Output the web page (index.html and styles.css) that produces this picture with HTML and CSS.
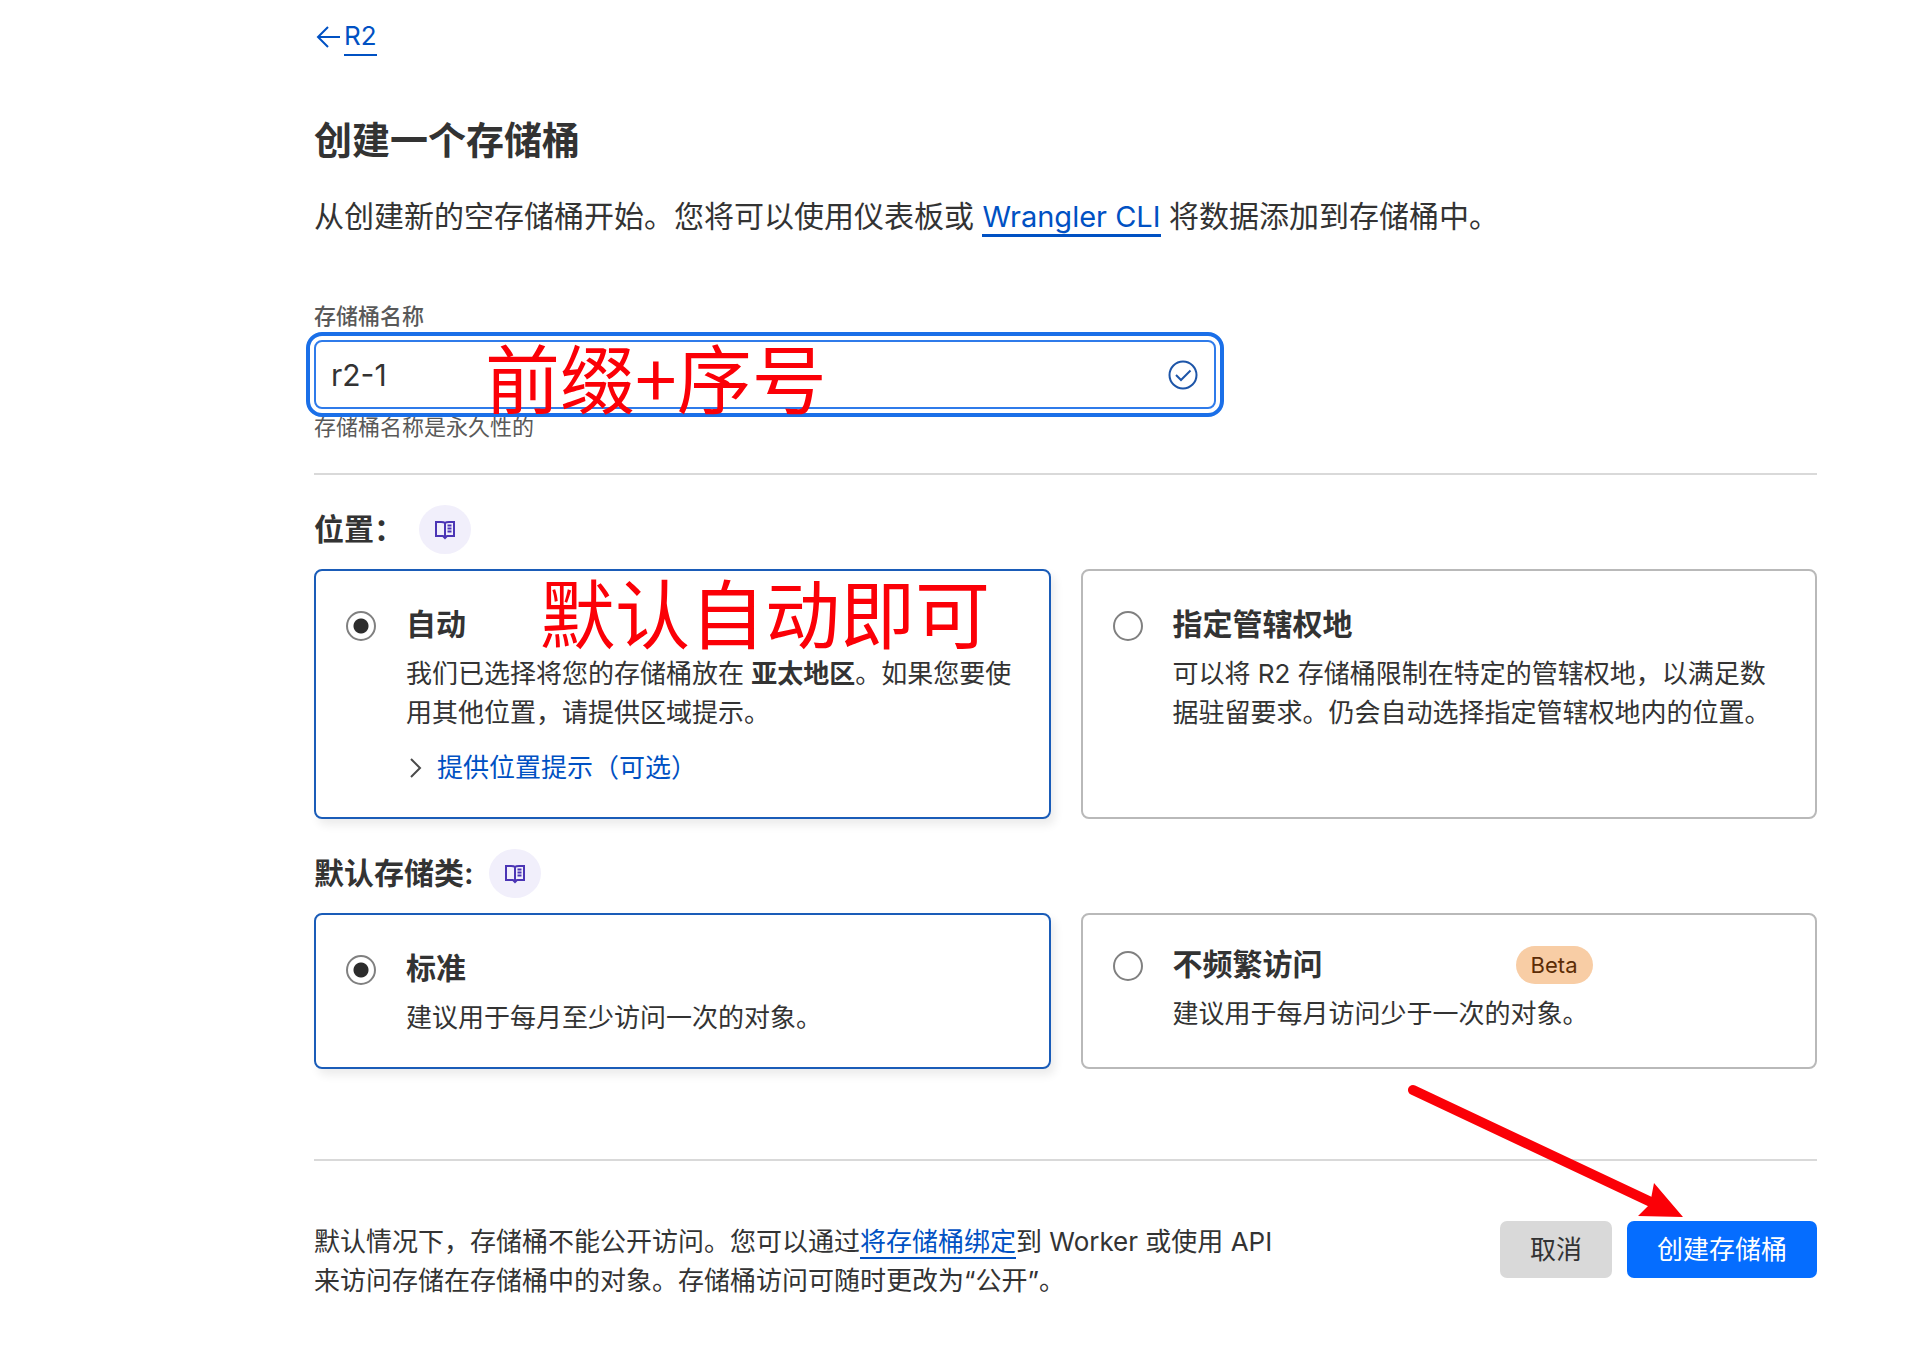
FILE: index.html
```html
<!DOCTYPE html>
<html lang="zh-CN">
<head>
  <meta charset="UTF-8" />
  <meta name="viewport" content="width=device-width, initial-scale=1" />
  <title>创建一个存储桶 | R2</title>
  <link rel="stylesheet" href="styles.css">
</head>
<body>
  <main class="page">
    <nav class="back">
      <svg class="back-icon" viewBox="0 0 24 26" aria-hidden="true">
        <path d="M12 3 L2 13 L12 23 M2 13 H24" />
      </svg>
      <a class="back-link" href="#">R2</a>
    </nav>

    <h1>创建一个存储桶</h1>
    <p class="intro">从创建新的空存储桶开始。您将可以使用仪表板或 <a class="link" href="#">Wrangler CLI</a> 将数据添加到存储桶中。</p>

    <form>
      <div class="field">
        <label for="bucketName">存储桶名称</label>
        <div class="input-wrap">
          <input type="text" id="bucketName" value="r2-1" aria-describedby="bucketHint">
          <svg class="check-icon" viewBox="0 0 30 30" aria-hidden="true">
            <circle cx="15" cy="15" r="13.5" />
            <path d="M8 15 L13 20 L22.5 10.5" />
          </svg>
          <span class="note note-name">前缀+序号</span>
        </div>
        <p class="hint" id="bucketHint">存储桶名称是永久性的</p>
      </div>

      <hr />

      <div class="section-head">
        <h2>位置：</h2>
        <a class="docs" href="#" aria-label="文档">
          <svg class="docs-icon" viewBox="0 0 20 20">
            <path d="M10 3 C9 2 8 2 6 2 H1 V16 H8 L10 18 L12 16 H19 V2 H14 C12 2 11 2 10 3 V18 M12.5 5.5 H16.5 M12.5 8.5 H16.5 M12.5 11.5 H16.5" />
          </svg>
        </a>
      </div>
      <div class="options">
        <div class="option selected">
          <input type="radio" name="location" id="locAuto" checked>
          <div class="option-body">
            <label class="option-title" for="locAuto">自动</label>
            <p>我们已选择将您的存储桶放在 <strong>亚太地区</strong>。如果您要使用其他位置，请提供区域提示。</p>
            <button type="button" class="expand">
              <svg class="chevron" viewBox="0 0 12 20" aria-hidden="true"><path d="M1 1 L10 10 L1 19" /></svg>
              提供位置提示（可选）
            </button>
          </div>
          <span class="note note-auto">默认自动即可</span>
        </div>
        <div class="option">
          <input type="radio" name="location" id="locJurisdiction">
          <div class="option-body">
            <label class="option-title" for="locJurisdiction">指定管辖权地</label>
            <p>可以将 R2 存储桶限制在特定的管辖权地，以满足数据驻留要求。仍会自动选择指定管辖权地内的位置。</p>
          </div>
        </div>
      </div>

      <div class="section-head">
        <h2>默认存储类:</h2>
        <a class="docs" href="#" aria-label="文档">
          <svg class="docs-icon" viewBox="0 0 20 20">
            <path d="M10 3 C9 2 8 2 6 2 H1 V16 H8 L10 18 L12 16 H19 V2 H14 C12 2 11 2 10 3 V18 M12.5 5.5 H16.5 M12.5 8.5 H16.5 M12.5 11.5 H16.5" />
          </svg>
        </a>
      </div>
      <div class="options">
        <div class="option selected">
          <input type="radio" name="storageClass" id="classStandard" checked>
          <div class="option-body">
            <label class="option-title" for="classStandard">标准</label>
            <p>建议用于每月至少访问一次的对象。</p>
          </div>
        </div>
        <div class="option with-badge">
          <input type="radio" name="storageClass" id="classInfrequent">
          <div class="option-body">
            <div class="title-row">
              <label class="option-title" for="classInfrequent">不频繁访问</label>
              <span class="badge">Beta</span>
            </div>
            <p>建议用于每月访问少于一次的对象。</p>
          </div>
        </div>
      </div>

      <hr class="footer-line" />

      <div class="footer">
        <p class="footer-text">默认情况下，存储桶不能公开访问。您可以通过<a class="link" href="#">将存储桶绑定</a>到 Worker 或使用 API 来访问存储在存储桶中的对象。存储桶访问可随时更改为“公开”。</p>
        <div class="actions">
          <button type="button" class="btn">取消</button>
          <button type="submit" class="btn btn-primary">创建存储桶</button>
          <svg class="arrow" viewBox="0 0 276 134" aria-hidden="true">
            <path class="arrow-line" d="M6 7 L246 120" />
            <path class="arrow-head" d="M247 100 L276 134 L231 133 L243 121 Z" />
          </svg>
        </div>
      </div>
    </form>
  </main>
</body>
</html>
```
FILE: styles.css
```css
/* Basic Reset */
* {
  box-sizing: border-box;
  margin: 0;
  padding: 0;
}
body {
  font-family: Inter, "Noto Sans CJK SC", sans-serif;
  font-size: 26px;
  line-height: 39px;
  color: #333;
  background-color: #fff;
}
button,
input {
  font: inherit;
  color: inherit;
}
.page {
  padding: 18px 103px 60px 314px;
}

/* Back link */
.back {
  display: flex;
  align-items: center;
  gap: 4px;
}
.back-icon {
  width: 24px;
  height: 26px;
  margin-left: 2px;
  fill: none;
  stroke: #0051c3;
  stroke-width: 2;
}
.back-link {
  line-height: 36px;
  color: #0051c3;
  text-decoration: none;
  border-bottom: 2px solid #0051c3;
}

h1 {
  margin-top: 60px;
  font-size: 38px;
  line-height: 48px;
  font-weight: 600;
}
.intro {
  margin-top: 31px;
  font-size: 30px;
  line-height: 42px;
}
.link {
  color: #0051c3;
  text-decoration: none;
  border-bottom: 2px solid #0051c3;
}
.intro .link {
  font-size: 29px;
  border-bottom-width: 3px;
}

/* Bucket name */
.field {
  margin-top: 63px;
  font-size: 22px;
  line-height: 30px;
  color: #595959;
}
.field label {
  display: block;
  font-weight: 500;
}
.input-wrap {
  position: relative;
  width: 60%;
  margin-top: 9px;
  font-size: 30px;
  color: #333;
}
.input-wrap input {
  display: block;
  width: 100%;
  height: 69px;
  padding: 0 60px 0 15px;
  border: 2px solid #2f7bea;
  border-radius: 8px;
  outline: 4px solid #1a6fe8;
  outline-offset: 4px;
  background-color: #fff;
}
.check-icon {
  position: absolute;
  top: 20px;
  right: 18px;
  width: 30px;
  height: 30px;
  fill: none;
  stroke: #1d55a8;
  stroke-width: 2;
}
.hint {
  margin-top: 3px;
}

/* Red notes over the form */
.note {
  position: absolute;
  font-family: "Noto Sans CJK SC", sans-serif;
  font-size: 75px;
  line-height: 75px;
  white-space: nowrap;
  color: #fb0007;
  pointer-events: none;
}
.note-name {
  top: -2px;
  left: 171px;
}
.note-auto {
  top: 2px;
  left: 224px;
}

hr {
  margin: 31px 0 30px;
  border: none;
  border-top: 2px solid #d9d9d9;
}

.section-head {
  display: flex;
  align-items: center;
  gap: 15px;
}
h2 {
  font-size: 30px;
  font-weight: 600;
}
.docs {
  display: flex;
  align-items: center;
  justify-content: center;
  width: 52px;
  height: 49px;
  border-radius: 50%;
  background-color: #f1effb;
}
.docs-icon {
  width: 20px;
  height: 20px;
  fill: none;
  stroke: #4b35b5;
  stroke-width: 2;
}

/* Option cards */
.options {
  display: grid;
  grid-template-columns: 1fr 1fr;
  gap: 30px;
  margin: 15px 0 30px;
}
.option {
  position: relative;
  display: flex;
  align-items: flex-start;
  gap: 30px;
  padding: 34px 30px 30px;
  border: 2px solid #b9b9b9;
  border-radius: 8px;
}
.option.selected {
  border-color: #1a5cb8;
  box-shadow: 4px 6px 10px rgba(0, 0, 0, 0.08);
}
.option.with-badge {
  padding-top: 30px;
}
.option input {
  appearance: none;
  flex: none;
  width: 30px;
  height: 30px;
  margin-top: 6px;
  border: 2px solid #808080;
  border-radius: 50%;
  background-color: #fff;
}
.option input:checked {
  background-image: radial-gradient(circle, #2c2c2c 7px, transparent 8px);
}
.option-body {
  flex: 1;
}
.option-title {
  display: block;
  font-size: 30px;
  font-weight: 600;
}
.option-body p {
  margin-top: 10px;
}
.title-row {
  display: flex;
  align-items: center;
  justify-content: space-between;
  max-width: 420px;
}
.badge {
  padding: 0 15px;
  border-radius: 19px;
  font-size: 22px;
  line-height: 38px;
  color: #5c2c05;
  background-color: #f8cda5;
}
.expand {
  display: flex;
  align-items: center;
  gap: 15px;
  margin-top: 16px;
  padding-left: 4px;
  border: none;
  background: none;
  color: #0051c3;
  cursor: pointer;
}
.chevron {
  width: 12px;
  height: 20px;
  fill: none;
  stroke: #4a4a4a;
  stroke-width: 2;
}

/* Footer */
.footer-line {
  margin: 90px 0 60px;
}
.footer {
  display: flex;
  align-items: flex-start;
  justify-content: space-between;
}
.footer-text {
  width: 65%;
  padding-top: 1px;
}
.actions {
  position: relative;
  display: flex;
  gap: 15px;
}
.btn {
  padding: 9px 30px;
  border: none;
  border-radius: 7px;
  background-color: #d9d9d9;
  white-space: nowrap;
  cursor: pointer;
}
.btn-primary {
  background-color: #056dff;
  color: #fff;
}
.arrow {
  position: absolute;
  right: 134px;
  bottom: calc(100% + 4px);
  width: 276px;
  height: 134px;
  pointer-events: none;
}
.arrow-line {
  fill: none;
  stroke: #fb0007;
  stroke-width: 10;
  stroke-linecap: round;
}
.arrow-head {
  fill: #fb0007;
}
```
